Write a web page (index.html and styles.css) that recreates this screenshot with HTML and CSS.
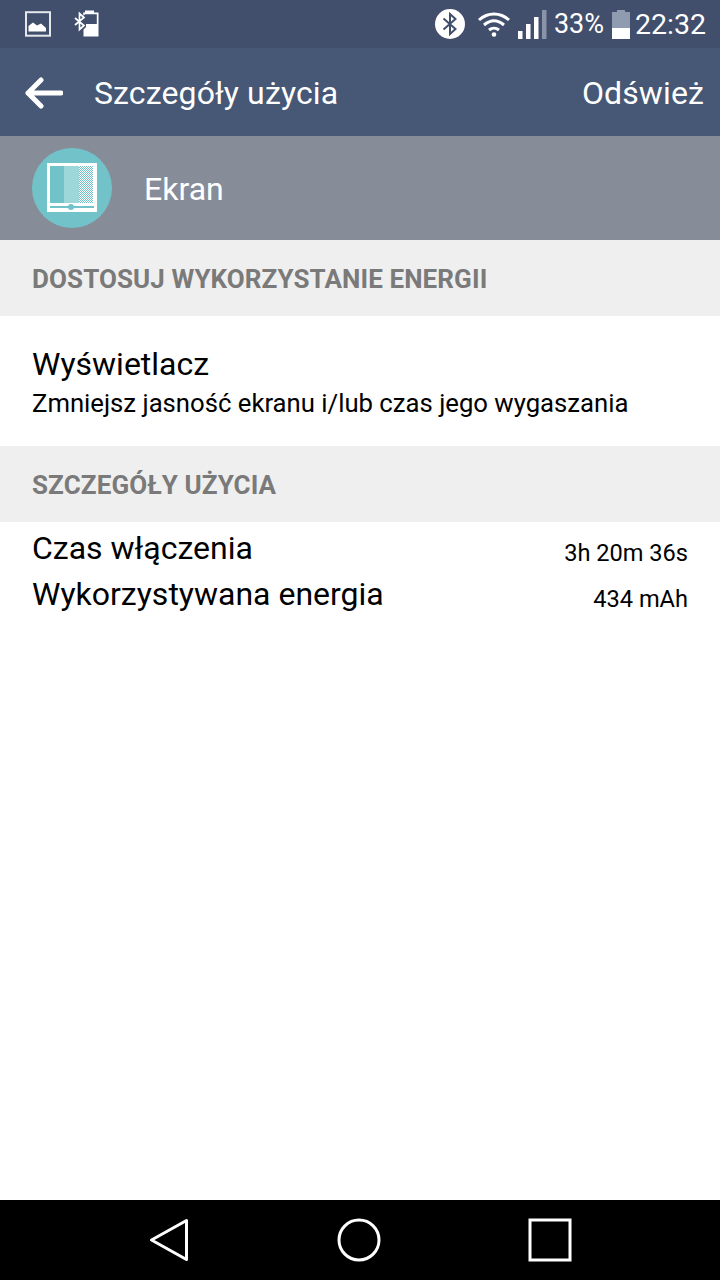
FILE: index.html
```html
<!DOCTYPE html>
<html lang="pl">
<head>
<meta charset="utf-8">
<title>Szczegóły użycia</title>
<link rel="stylesheet" href="styles.css">
</head>
<body>
<div class="screen">
  <div class="status">
    <div class="status-left">
      <svg width="28" height="26" viewBox="0 0 28 26"><rect x="2" y="1.200" width="24" height="23.500" fill="none" stroke="#e4e8ea" stroke-width="2"/><path d="M4.500 20.500V15L9 11.500L13 14.500L17 12.500L22 17V20.500Z" fill="#fff"/></svg>
      <svg width="26" height="28" viewBox="0 0 26 28"><path d="M9 2.500H11V0.500H20V2.500H24.500V26.500H9.500V19.500L12 17V14H22.800V4.200H11L9.500 5.700Z" fill="#fff" fill-rule="evenodd"/><path d="M1 8L10 15.500L5.500 19.500V3.500L10 7.500L1 15" fill="none" stroke="#fff" stroke-width="1.700"/></svg>
    </div>
    <div class="status-right">
      <svg width="30" height="30" viewBox="0 0 30 30"><circle cx="15" cy="15" r="15" fill="#fff"/><path d="M8.500 9.500L20.500 20L15 25V5L20.500 10L8.500 20.500" fill="none" stroke="#414e6c" stroke-width="2"/></svg>
      <svg class="ic-wifi" width="34" height="26" viewBox="0 0 34 26"><path d="M2 9C11 1 23 1 32 9M7 14C13.500 8.500 20.500 8.500 27 14M12 19C15 16.500 19 16.500 22 19" fill="none" stroke="#fff" stroke-width="3"/><circle cx="17" cy="23.500" r="2.300" fill="#fff"/></svg>
      <svg class="ic-signal" width="29" height="29" viewBox="0 0 29 29"><rect x="0" y="21" width="4.500" height="8" fill="#fff"/><rect x="8" y="14" width="4.500" height="15" fill="#fff"/><rect x="16" y="7" width="4.500" height="22" fill="#fff"/><rect x="24" y="0" width="4.500" height="29" fill="#8a94a8"/></svg>
      <span class="pct">33%</span>
      <svg class="ic-bat" width="18" height="29" viewBox="0 0 18 29"><path d="M5 0H13V2H18V18H0V2H5Z" fill="#8f9bae"/><rect x="0" y="18" width="18" height="11" fill="#fff"/></svg>
      <span class="clock">22:32</span>
    </div>
  </div>
  <header class="appbar">
    <svg class="back" width="38" height="32" viewBox="0 0 38 32"><path d="M36 16H3M16 3L3 16L16 29" fill="none" stroke="#fff" stroke-width="5" stroke-linecap="round" stroke-linejoin="round"/></svg>
    <span class="appbar-title">Szczegóły użycia</span>
    <span class="appbar-action">Odśwież</span>
  </header>
  <section class="hero">
    <svg width="80" height="80" viewBox="0 0 80 80">
      <defs><pattern id="dots" width="2" height="2" patternUnits="userSpaceOnUse"><rect width="2" height="2" fill="#fff"/><rect width="1" height="1" fill="#71c3c9"/><rect x="1" y="1" width="1" height="1" fill="#71c3c9"/></pattern></defs>
      <circle cx="40" cy="40" r="40" fill="#71c3c9"/>
      <rect x="15" y="15" width="50" height="49" fill="#fff"/>
      <rect x="18" y="18" width="14" height="37" fill="#71c3c9"/>
      <rect x="32" y="18" width="15" height="37" fill="#9ed7da"/>
      <rect x="47" y="18" width="14" height="37" fill="url(#dots)"/>
      <rect x="18" y="58" width="44" height="2" fill="#71c3c9"/>
      <circle cx="39" cy="59" r="3" fill="#71c3c9"/>
    </svg>
    <span class="hero-name">Ekran</span>
  </section>
  <h2 class="section-head">DOSTOSUJ WYKORZYSTANIE ENERGII</h2>
  <div class="action-row">
    <div class="row-title">Wyświetlacz</div>
    <div class="row-sub">Zmniejsz jasność ekranu i/lub czas jego wygaszania</div>
  </div>
  <h2 class="section-head">SZCZEGÓŁY UŻYCIA</h2>
  <div class="details">
    <div class="detail"><span class="row-title">Czas włączenia</span><span class="detail-val">3h 20m 36s</span></div>
    <div class="detail"><span class="row-title">Wykorzystywana energia</span><span class="detail-val">434 mAh</span></div>
  </div>
  <div class="spacer"></div>
  <nav class="navbar">
    <svg width="42" height="44" viewBox="0 0 42 44"><path d="M38.500 2.500V41.500L3.500 22Z" fill="none" stroke="#fff" stroke-width="3" stroke-linejoin="round"/></svg>
    <svg width="44" height="44" viewBox="0 0 44 44"><circle cx="22" cy="22" r="20" fill="none" stroke="#fff" stroke-width="3"/></svg>
    <svg width="44" height="44" viewBox="0 0 44 44"><rect x="2" y="2" width="40" height="40" fill="none" stroke="#fff" stroke-width="3"/></svg>
  </nav>
</div>
</body>
</html>
```
FILE: styles.css
```css
* { box-sizing: border-box; }
html, body { margin: 0; padding: 0; }
body { width: 720px; height: 1280px; overflow: hidden; background: #fff; font-family: Roboto, "Noto Sans", sans-serif; color: #000; }
.screen { width: 720px; height: 1280px; display: flex; flex-direction: column; }
.status { height: 48px; background: #414e6c; display: flex; justify-content: space-between; align-items: center; padding: 0 14px 0 24px; color: #fff; }
.status-left { display: flex; align-items: center; gap: 22px; }
.status-right { display: flex; align-items: center; }
.ic-wifi { margin-left: 12px; }
.ic-signal { margin-left: 7px; }
.pct { font-size: 27px; margin-left: 7px; }
.ic-bat { margin-left: 8px; }
.clock { font-size: 28.500px; margin-left: 5px; }
.appbar { height: 88px; background: #465875; color: #fff; display: flex; align-items: center; padding: 1px 16px 0 25px; }
.back { margin-right: 31px; }
.appbar-title { font-size: 32px; letter-spacing: 0.120px; flex: 1; }
.appbar-action { font-size: 32px; letter-spacing: 0.120px; }
.hero { height: 104px; background: #878c99; display: flex; align-items: center; padding-left: 32px; gap: 32px; color: #fff; }
.hero-name { font-size: 32px; padding-top: 2px; }
.section-head { margin: 0; height: 76px; background: #efefef; color: #7a7a7a; font-size: 26px; letter-spacing: 0.100px; font-weight: 700; display: flex; align-items: center; padding: 2px 0 0 32px; }
.action-row { height: 130px; padding: 30px 32px 0; }
.row-title { font-size: 32px; line-height: 36px; }
.row-sub { font-size: 25.700px; line-height: 36px; padding-top: 3px; }
.details { padding: 7px 32px 0; display: flex; flex-direction: column; gap: 10px; }
.detail { display: flex; justify-content: space-between; align-items: center; }
.detail + .detail { margin-top: -2px; }
.detail-val { font-size: 23.600px; padding-top: 10px; }
.spacer { flex: 1; }
.navbar { height: 80px; background: #000; display: flex; align-items: center; justify-content: space-between; padding: 0 148px; }
```
